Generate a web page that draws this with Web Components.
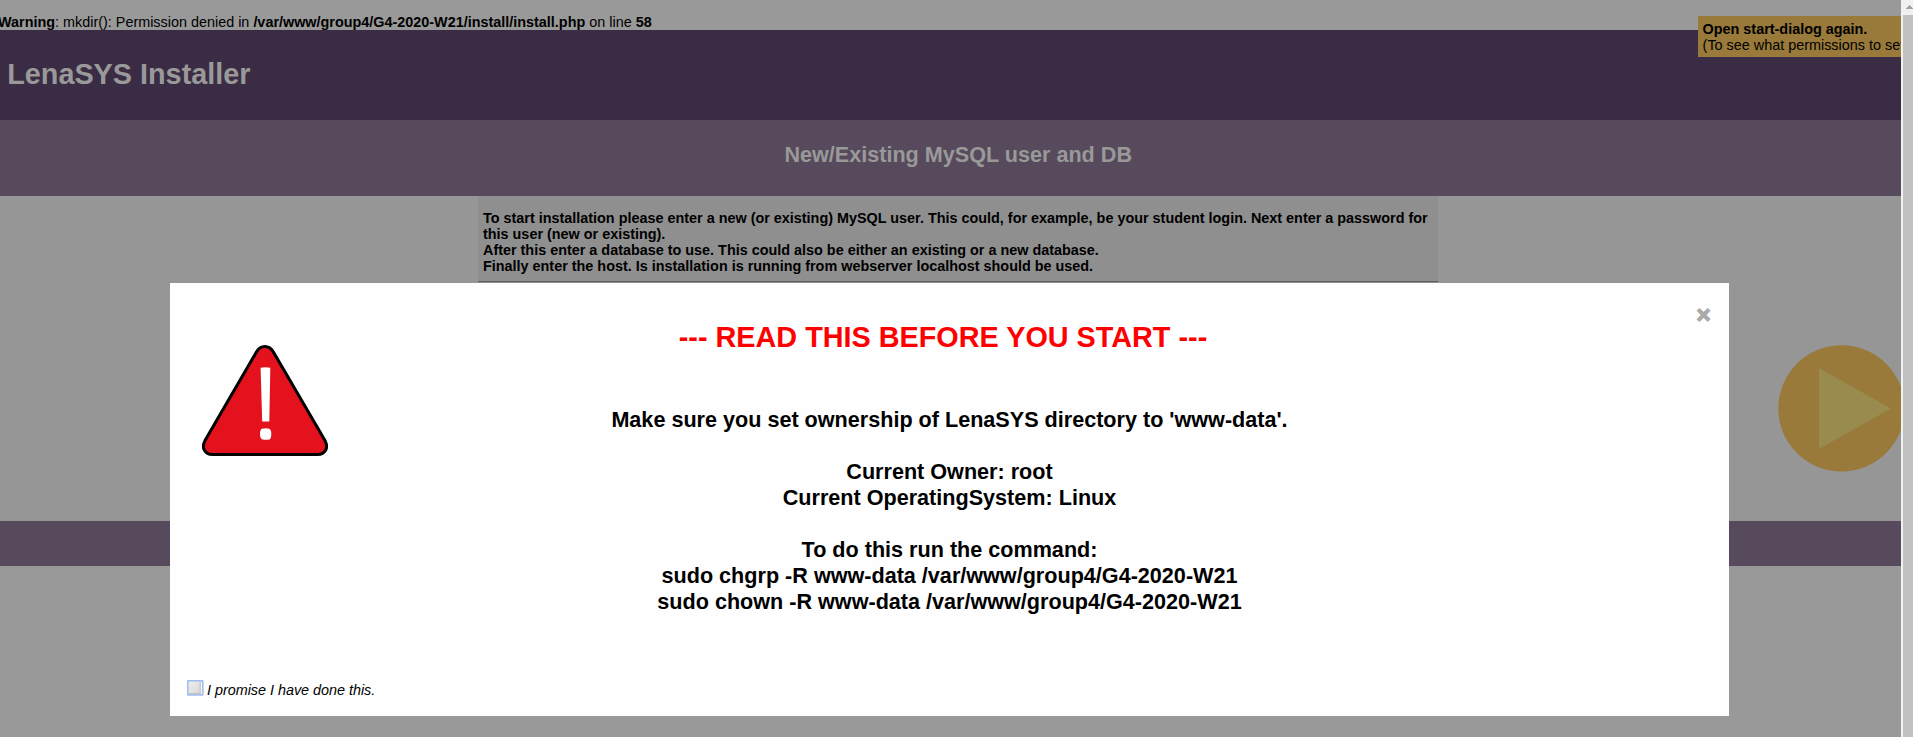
<!DOCTYPE html>
<html lang="en">
<head>
<meta charset="utf-8">
<title>Install LenaSYS!</title>
<style>
html, body { margin: 0; height: 100%; overflow: hidden; }
body { font: 14.4px/16px "Liberation Sans", Arial, sans-serif; color: #000; background: #999; }
</style>
</head>
<body>
<installer-app></installer-app>
<script>
const define = (name, html) => customElements.define(name, class extends HTMLElement {
  constructor() {
    super();
    const t = document.createElement('template');
    t.innerHTML = html;
    this.attachShadow({ mode: 'open' }).append(t.content.cloneNode(true));
  }
});

define('php-warning', `
<style>
:host { display: block; height: 30px; padding-top: 14px; box-sizing: border-box; white-space: nowrap; }
div { margin-left: -2px; }
</style><div><slot></slot></div>`);

define('page-header', `
<style>
:host { display: flex; align-items: center; height: 90px; background: #3b2c45; }
h1 { margin: 0 0 0 7.2px; font-size: 28.8px; line-height: 32px; color: #999; padding-bottom: 2px; }
</style><h1><slot></slot></h1>`);

define('step-header', `
<style>
:host { display: block; height: 76px; background: #574a5c; box-sizing: border-box; padding: 22px 0 0 3.4px; text-align: center; }
h2 { margin: 0; font-size: 21.6px; line-height: 26px; color: #999; }
</style><h2><slot></slot></h2>`);

define('step-content', `
<style>
:host { display: flex; height: 325px; background: #969696; box-sizing: border-box; padding-left: 478px; }
section { width: 960px; background: #8f8f8f; }
.text { box-sizing: border-box; height: 86px; padding: 14px 3px 0 5px; font-weight: bold; border-bottom: 1px solid #5c5c5c; }
</style><section><div class="text"><slot></slot></div></section>`);

define('progress-band', `
<style>:host { display: block; height: 45px; background: #574a5c; }</style>`);

define('permission-hint', `
<style>
:host { display: block; position: absolute; left: 1698px; top: 16px; width: 203px; height: 41px; overflow: hidden; background: #997a3a; box-sizing: border-box; padding: 5px 0 0 4.6px; white-space: nowrap; }
</style><slot></slot>`);

define('next-arrow', `
<style>
:host { display: block; position: absolute; left: 1778px; top: 345px; width: 123px; height: 127px; overflow: hidden; }
svg { display: block; }
</style>
<svg width="127" height="127"><circle cx="63.5" cy="63.4" r="63.2" fill="#997a3a"/><path d="M41 23V104L113 63.4z" fill="#998b4d"/></svg>`);

define('page-scrollbar', `
<style>
:host { display: grid; grid-template-rows: 15px 1fr; position: absolute; right: 0; top: 0; width: 12px; height: 100%; background: #f1f1f1; }
svg { display: block; }
i { margin-left: 2px; background: #c1c1c1; }
</style>
<svg width="12" height="15"><path d="M5 9V8H6V7H7V6H8V5H9V6H10V7H11V8H12V9z" fill="#a3a3a3"/></svg><i></i>`);

define('warning-sign', `
<style>:host { display: block; width: 126px; height: 111px; } svg { display: block; }</style>
<svg width="126" height="111" viewBox="0 0 126 111">
<path d="M54.4 7C58.6-.3 67.2-.3 71.4 7L123 95.6C127 103 123 109.5 115.7 109.5H10.3C3 109.5-1 103 3 95.6Z" fill="#e3121d" stroke="#000" stroke-width="3"/>
<path d="M58.6 22.8Q63.3 21.7 68.3 22.8L67.3 76.6H60.2Z" fill="#fff"/>
<path d="M59.8 83.8Q63.5 82.6 67.3 83.8Q69.3 84.6 69.3 89Q69.3 94 67.3 94.4Q63.5 95.4 60 94.2Q58 93.4 58 89Q58 84.8 59.8 83.8Z" fill="#fff"/>
</svg>`);

define('promise-box', `
<style>
:host { display: flex; align-items: flex-start; font-style: italic; }
svg { display: block; margin-right: 3px; }
span { padding-top: 2px; letter-spacing: -.02px; }
</style>
<svg width="17" height="16">
<defs><linearGradient id="g" x2="1" y2="1"><stop stop-color="#ededed"/><stop offset="1" stop-color="#d9d9d9"/></linearGradient></defs>
<rect width="16.6" height="15.7" rx="1.2" fill="#9dbdf5"/>
<rect x="1.4" y="1.4" width="13.8" height="13" fill="#fff" stroke="#8fb0ee" stroke-width=".6"/>
<rect x="1.6" y="1.6" width="12" height="12.2" fill="url(#g)"/>
<path d="M13.2 2V13.6H2" fill="none" stroke="#c2c2c2" stroke-width="1.2"/>
</svg><span><slot></slot></span>`);

define('start-dialog', `
<style>
:host { display: grid; position: absolute; left: 170px; top: 283px; width: 1559px; height: 433px; box-sizing: border-box; background: #fefefe;
  grid-template: 89px 1fr 36px / 158px 1fr 158px; }
warning-sign { margin: 62px 0 0 31.5px; grid-area: 1 / 1 / 3; }
h1 { grid-area: 1 / 2; margin: 38px 13px 0 0; font-size: 28.8px; line-height: 32px; color: #f00; text-align: center; }
.close { grid-area: 1 / 3; justify-self: end; margin: 16px 18.6px 0 0; color: #aaa; font: bold 24px/32px "Liberation Sans", Arial, sans-serif; -webkit-text-stroke: 1.3px #aaa; }
.body { grid-area: 2 / 2; padding-top: 35px; font-weight: bold; font-size: 21.6px; line-height: 26px; text-align: center; }
promise-box { grid-area: 3 / 1 / 4 / 4; margin-left: 17px; }
</style>
<warning-sign></warning-sign>
<h1><slot name="title"></slot></h1>
<span class="close">&times;</span>
<div class="body"><slot></slot></div>
<promise-box>I promise I have done this.</promise-box>`);

define('installer-app', `
<style>:host { display: block; position: relative; height: 737px; overflow: hidden; }</style>
<php-warning><b>Warning</b>: mkdir(): Permission denied in <b>/var/www/group4/G4-2020-W21/install/install.php</b> on line <b>58</b></php-warning>
<page-header>LenaSYS Installer</page-header>
<step-header>New/Existing MySQL user and DB</step-header>
<step-content>To start installation please enter a new (or existing) MySQL user. This could, for example, be your student login. Next enter a password for this user (new or existing).<br>After this enter a database to use. This could also be either an existing or a new database.<br>Finally enter the host. Is installation is running from webserver localhost should be used.</step-content>
<progress-band></progress-band>
<permission-hint><b>Open start-dialog again.</b><br>(To see what permissions to set)</permission-hint>
<next-arrow></next-arrow>
<page-scrollbar></page-scrollbar>
<start-dialog><span slot="title">--- READ THIS BEFORE YOU START ---</span>Make sure you set ownership of LenaSYS directory to 'www-data'.<br><br>Current Owner: root<br>Current OperatingSystem: Linux<br><br>To do this run the command:<br>sudo chgrp -R www-data /var/www/group4/G4-2020-W21<br>sudo chown -R www-data /var/www/group4/G4-2020-W21</start-dialog>`);
</script>
</body>
</html>
